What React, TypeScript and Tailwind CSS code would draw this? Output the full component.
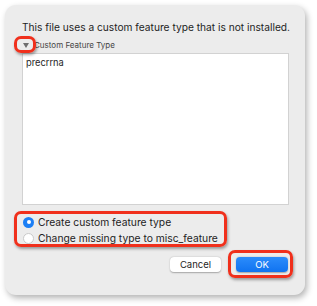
import React from "react";

const font = "font-['Inter','Liberation_Sans',sans-serif]";

function Highlight({ className }: { className: string }) {
  return (
    <div
      className={`pointer-events-none absolute rounded-[7px] border-[3px] border-[#f0301c] shadow-[1px_2px_3px_rgba(0,0,0,0.35)] ${className}`}
    />
  );
}

function Radio({ checked, label }: { checked: boolean; label: string }) {
  return (
    <label className="flex h-[16px] items-center gap-[4px]">
      {checked ? (
        <span className="flex h-[11px] w-[11px] items-center justify-center rounded-full bg-[#1c7ff5]">
          <span className="h-[4px] w-[4px] rounded-full bg-white" />
        </span>
      ) : (
        <span className="h-[11px] w-[11px] rounded-full border border-[#c9c9c9] bg-white" />
      )}
      <span className="text-[10.3px] leading-[16px] text-[#1e1e1e]">{label}</span>
    </label>
  );
}

export default function App() {
  return (
    <div className={`relative h-[306px] w-[317px] overflow-hidden bg-white ${font}`}>
      <div className="ml-[5px] mt-[5px] flex h-[290px] w-[300px] flex-col rounded-[11px] bg-[#ececec] px-[17px] pt-[15px] shadow-[2px_3px_6px_rgba(0,0,0,0.3)]">
        <p className="text-[10.2px] leading-[14px] whitespace-nowrap text-[#1e1e1e]">
          This file uses a custom feature type that is not installed.
        </p>

        {/* disclosure */}
        <div className="mt-[5px] flex h-[12px] items-center gap-[5px] pl-[1px]">
          <svg width="6" height="5" viewBox="0 0 6 5">
            <path d="M0 0 H6 L3 5 Z" fill="#6e6e6e" />
          </svg>
          <span className="text-[8px] leading-[12px] text-[#444]">Custom Feature Type</span>
        </div>

        {/* text box */}
        <div className="mt-[2px] h-[152px] w-[267px] border border-[#d2d2d2] bg-white px-[3px] pt-[2px] text-[9.3px] leading-[14px] text-[#1e1e1e]">
          precrrna
        </div>

        {/* radios */}
        <div className="mt-[9px] flex flex-col pl-[1px]">
          <Radio checked label="Create custom feature type" />
          <Radio checked={false} label="Change missing type to misc_feature" />
        </div>

        {/* buttons */}
        <div className="mt-[11px] flex justify-end gap-[15px]">
          <button className="h-[15px] w-[51px] rounded-[4px] bg-white text-[9.5px] leading-[15px] text-[#1e1e1e] shadow-[0_0.5px_1.5px_rgba(0,0,0,0.3)]">
            Cancel
          </button>
          <button className="h-[15px] w-[52px] rounded-[4px] bg-gradient-to-b from-[#2b8cfb] to-[#0f73f0] text-[9.5px] leading-[15px] text-white shadow-[0_0.5px_1.5px_rgba(0,0,0,0.3)]">
            OK
          </button>
        </div>
      </div>

      <Highlight className="left-[14px] top-[36px] h-[17px] w-[22px]" />
      <Highlight className="left-[14px] top-[211px] h-[36px] w-[213px]" />
      <Highlight className="left-[228px] top-[250px] h-[28px] w-[65px]" />
    </div>
  );
}
